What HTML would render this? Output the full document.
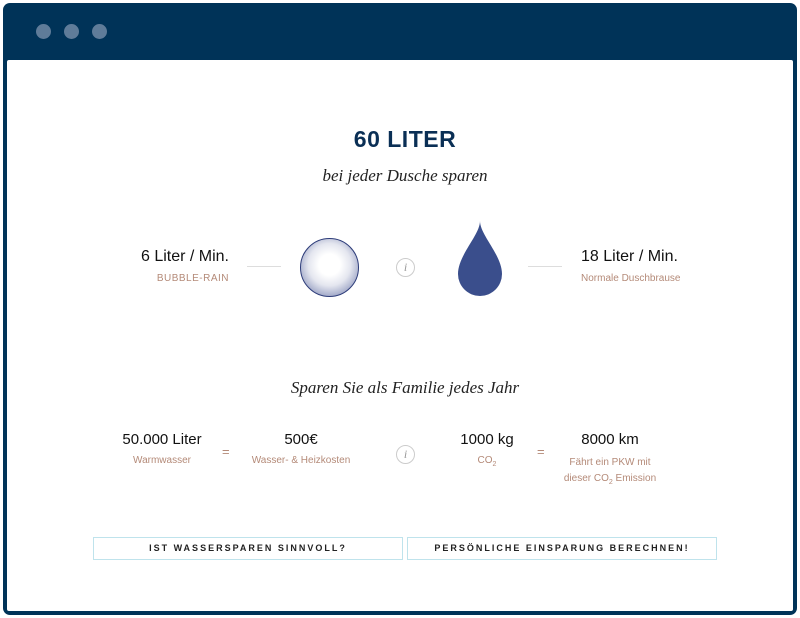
<!DOCTYPE html>
<html><head><meta charset="utf-8"><style>
*{margin:0;padding:0;box-sizing:border-box}
body{width:800px;height:618px;background:#fff;position:relative;overflow:hidden;font-family:"Liberation Sans",sans-serif}
.frame{position:absolute;left:3px;top:3px;width:794px;height:612px;background:#003358;border-radius:7px}
.inner{position:absolute;left:7px;top:60px;width:786px;height:551px;background:#fff;border-radius:2px}
.dot{position:absolute;top:24px;width:15px;height:15px;border-radius:50%;background:#5f7c99}
.a{position:absolute;white-space:nowrap}
.c{transform:translateX(-50%);text-align:center}
.big{font-size:15px;color:#111}
.sub{font-size:10px;color:#b48a78}
.serif{font-family:"Liberation Serif",serif;font-style:italic;color:#222}
.line{position:absolute;height:1px;background:#ddd}
.info{position:absolute;width:19px;height:19px;border:1px solid #ccc;border-radius:50%;font-family:"Liberation Serif",serif;font-style:italic;color:#999;font-size:12px;text-align:center;line-height:17px}
.btn{position:absolute;top:537px;height:23px;border:1px solid #bfe3ec;font-size:9px;font-weight:bold;letter-spacing:2px;text-align:center;line-height:21px;color:#222}
.eq{position:absolute;color:#b48a78;font-size:13px}
</style></head><body>
<div class="frame"></div>
<div class="dot" style="left:36px"></div><div class="dot" style="left:64px"></div><div class="dot" style="left:92px"></div>
<div class="inner"></div>
<div class="a c" style="left:405px;top:126px;font-size:23px;font-weight:bold;color:#0a2f55;letter-spacing:0.5px">60 LITER</div>
<div class="a c serif" style="left:405px;top:166px;font-size:17px">bei jeder Dusche sparen</div>
<div class="a big" style="right:571px;top:248px;font-size:16px">6 Liter / Min.</div>
<div class="a sub" style="right:571px;top:273px;letter-spacing:0.5px">BUBBLE-RAIN</div>
<div class="line" style="left:247px;top:266px;width:34px"></div>
<div style="position:absolute;left:300px;top:238px;width:59px;height:59px;border-radius:50%;background:radial-gradient(circle at 50% 45%,#fff 25%,#e4e6ef 50%,#9aa2c4 78%,#3b4a88 100%);border:1px solid #2e3d7a"></div>
<div class="info" style="left:396px;top:258px">i</div>
<svg style="position:absolute;left:456px;top:221px" width="48" height="76" viewBox="0 0 48 76"><path d="M24 0 C24 14 2 34 2 53 A22 22 0 0 0 46 53 C46 34 24 14 24 0Z" fill="#3a4e8c"/></svg>
<div class="line" style="left:528px;top:266px;width:34px"></div>
<div class="a big" style="left:581px;top:248px;font-size:16px">18 Liter / Min.</div>
<div class="a sub" style="left:581px;top:273px">Normale Duschbrause</div>
<div class="a c serif" style="left:405px;top:378px;font-size:17px">Sparen Sie als Familie jedes Jahr</div>
<div class="a c big" style="left:162px;top:431px">50.000 Liter</div>
<div class="a c sub" style="left:162px;top:455px">Warmwasser</div>
<div class="eq" style="left:222px;top:444px">=</div>
<div class="a c big" style="left:301px;top:431px">500€</div>
<div class="a c sub" style="left:301px;top:455px">Wasser- &amp; Heizkosten</div>
<div class="info" style="left:396px;top:445px">i</div>
<div class="a c big" style="left:487px;top:431px">1000 kg</div>
<div class="a c sub" style="left:487px;top:455px">CO<sub style="font-size:7px">2</sub></div>
<div class="eq" style="left:537px;top:444px">=</div>
<div class="a c big" style="left:610px;top:431px">8000 km</div>
<div class="a c sub" style="left:610px;top:455px;line-height:16px">Fährt ein PKW mit<br>dieser CO<sub style="font-size:7px">2</sub> Emission</div>
<div class="btn" style="left:93px;width:310px">IST WASSERSPAREN SINNVOLL?</div>
<div class="btn" style="left:407px;width:310px">PERSÖNLICHE EINSPARUNG BERECHNEN!</div>
</body></html>
